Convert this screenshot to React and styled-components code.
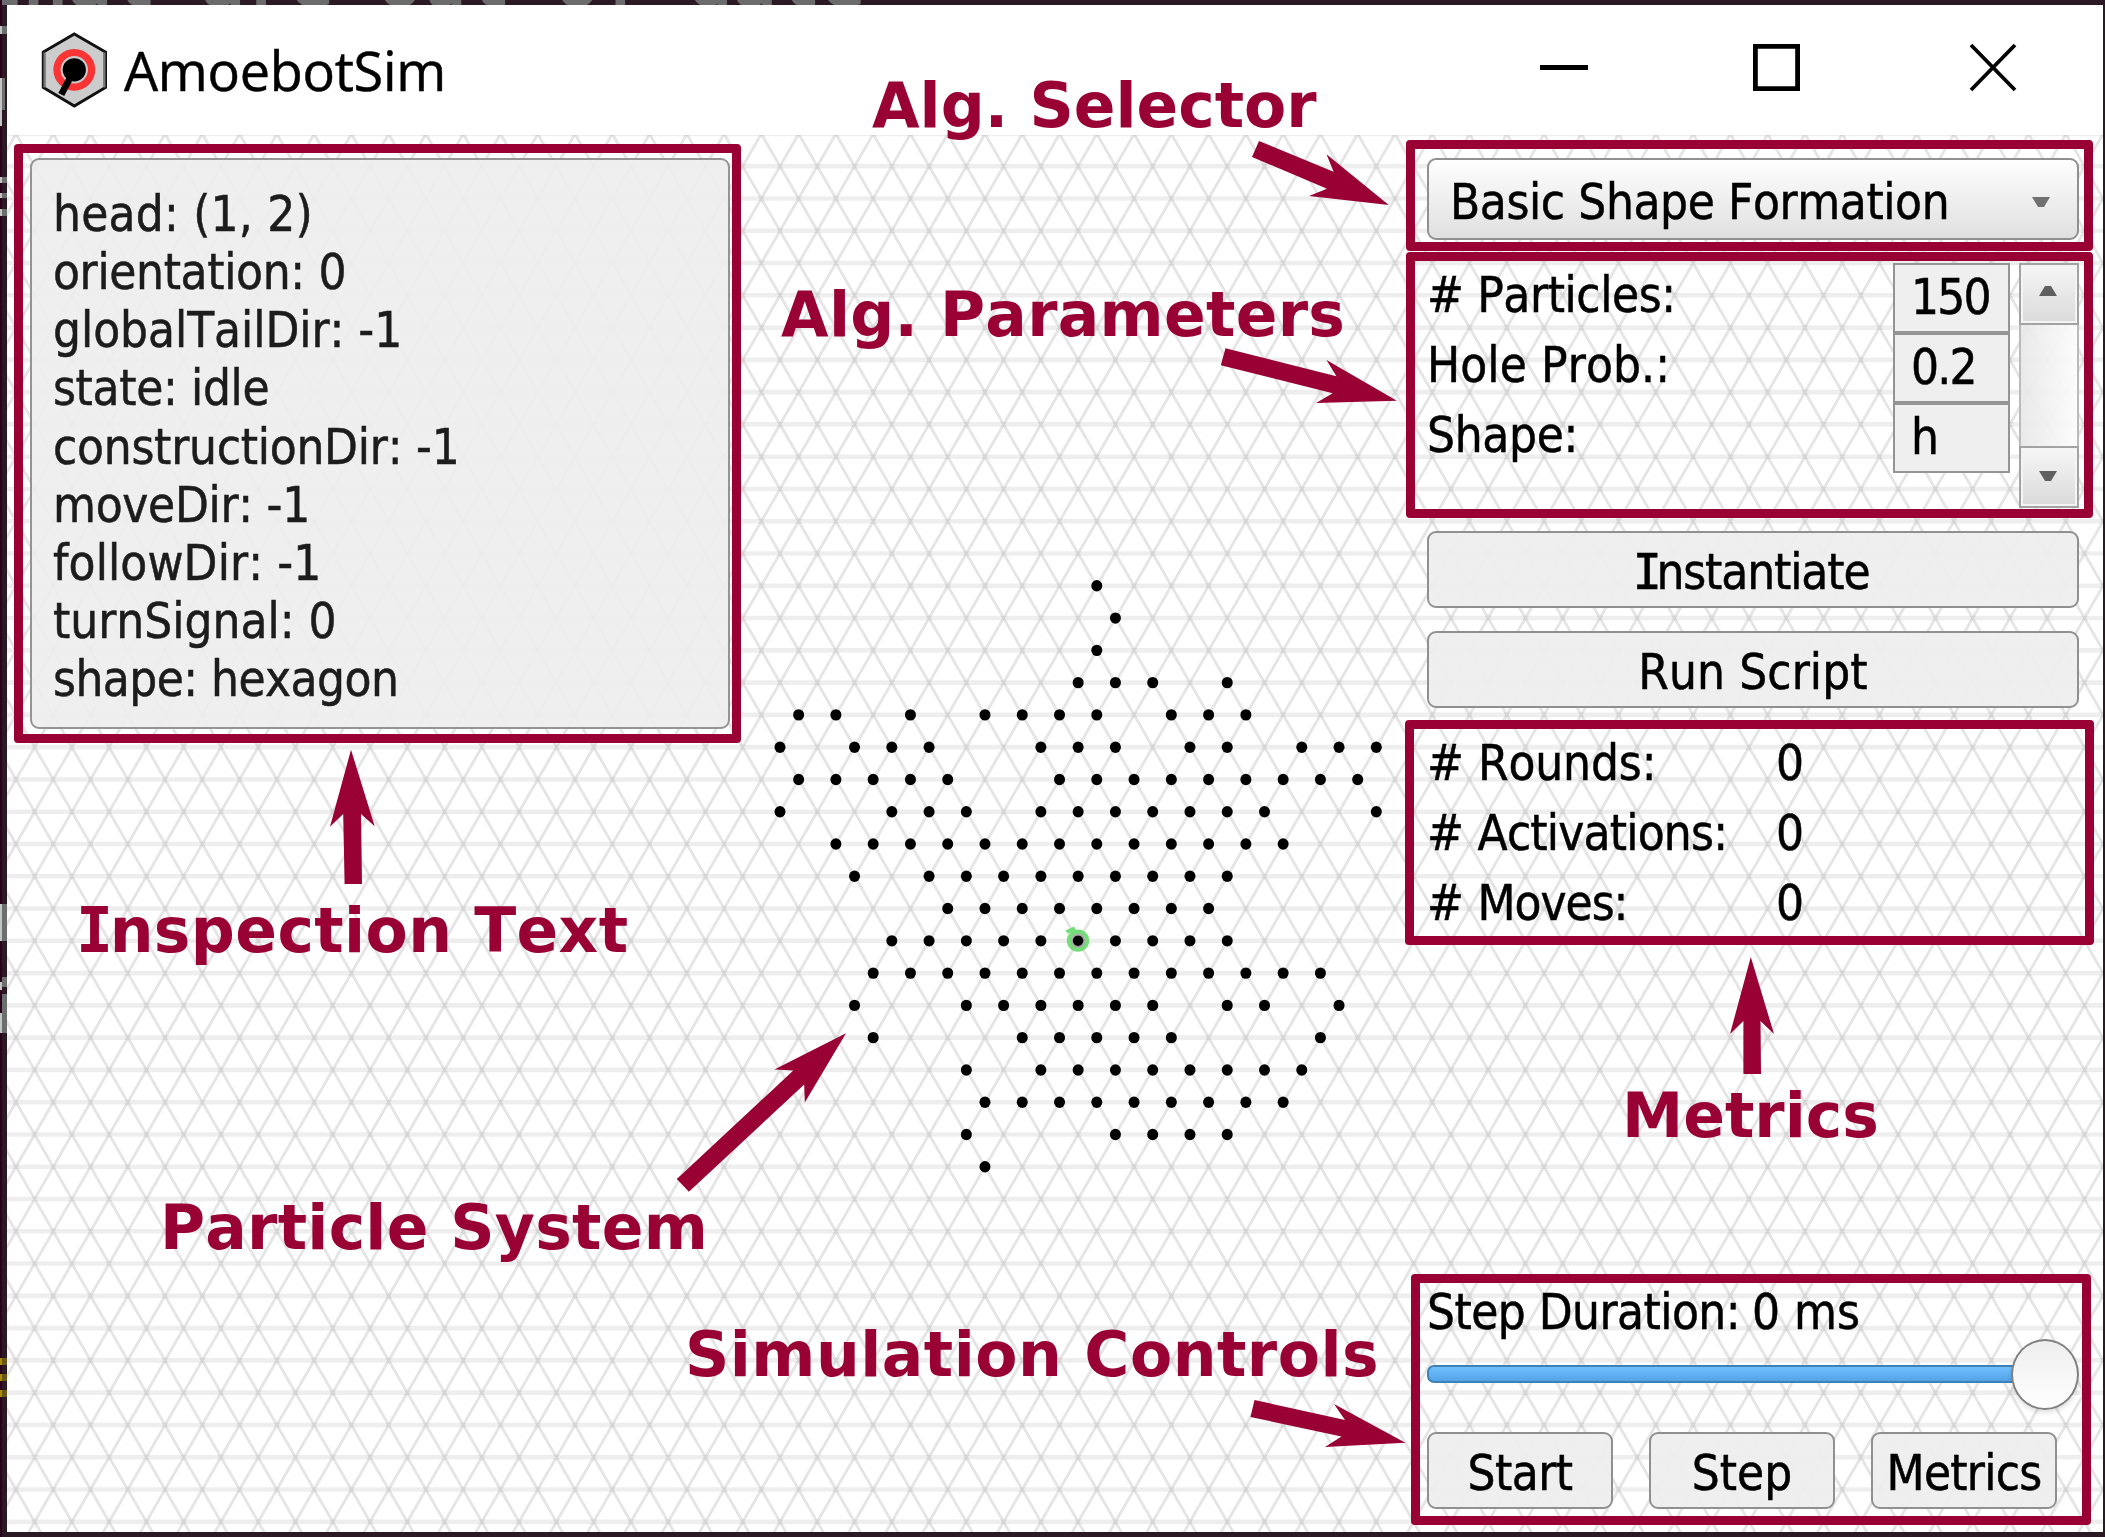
import React from "react";
import styled, { createGlobalStyle } from "styled-components";

const CRIMSON = "#990033";
const UI = `"DejaVu Sans Condensed", "DejaVu Sans", sans-serif`;

const GlobalStyle = createGlobalStyle`
  * { box-sizing: border-box; }
  body { margin: 0; background: #2b1a24; overflow: hidden; font-kerning: none; }
  button, input { font: inherit; font-kerning: inherit; color: inherit; margin: 0; }
`;

/* ---------- desktop and window ---------- */

const Desktop = styled.div`
  position: relative;
  width: 2105px;
  height: 1537px;
  padding: 5px 2px 5px 7px;
  background: #2b1a24;
  overflow: hidden;
  color: #000;
  font-family: ${UI};
  font-size: 49px;
  -webkit-text-stroke: ${(p) => p.$weight}px;
`;

const TerminalLine = styled.div`
  position: absolute;
  left: -21px;
  top: -60px;
  height: 65px;
  overflow: hidden;
  white-space: pre;
  color: #6c6c6c;
  font: 73.6px/80px "DejaVu Sans Mono", monospace;
  -webkit-text-stroke: 3px;
`;

const TerminalEdge = styled.svg`
  position: absolute;
  left: 0;
  top: 0;
`;

const Window = styled.div`
  position: relative;
  display: flex;
  flex-direction: column;
  width: 2096px;
  height: 1527px;
  background: #fff;
`;

const TitleBar = styled.header`
  display: flex;
  align-items: center;
  height: 130px;
  padding-left: 33px;
`;

const Title = styled.h1`
  flex: 1;
  margin: 0 0 0 15px;
  font: 400 54px/80px "Open Sans", sans-serif;
  letter-spacing: -0.3px;
`;

const WindowButtons = styled.div`
  display: flex;
  gap: 154px;
  padding-right: 80px;
`;

const WindowGlyph = styled.svg`
  display: block;
  width: 60px;
  height: 60px;
`;

const Client = styled.main`
  position: relative;
  display: flex;
  justify-content: space-between;
  flex: 1;
  padding: 23px 24px 23px 23px;
  overflow: hidden;
`;

const Canvas = styled.svg`
  position: absolute;
  left: 0;
  top: 0;
`;

/* ---------- inspection panel ---------- */

const Inspector = styled.section`
  position: relative;
  align-self: flex-start;
  width: 700px;
  height: 571px;
  padding: 26px 21px;
  border: 2px solid #949494;
  border-radius: 9px;
  background: rgba(238, 238, 238, 0.93);
  color: #1c1c1c;
`;

const InspectorLine = styled.div`
  line-height: 58.15px;
  white-space: pre;
  letter-spacing: ${(p) => p.$track}px;
`;

/* ---------- side panel ---------- */

const Side = styled.aside`
  position: relative;
  display: flex;
  flex-direction: column;
  width: 652px;
`;

const Select = styled.button`
  display: flex;
  align-items: center;
  justify-content: space-between;
  height: 82px;
  padding: 6px 27px 0 21px;
  border: 2px solid #909090;
  border-radius: 9px;
  background: linear-gradient(#fefefe, #e0e0e0);
  letter-spacing: -0.4px;
`;

const Triangle = styled.svg`
  display: block;
  width: 18px;
  height: 10px;
  fill: ${(p) => p.$tone || "#606060"};
  transform: ${(p) => (p.$up ? "scaleY(-1)" : "none")};
`;

const Params = styled.div`
  display: flex;
  height: 245px;
  margin: 23px 0;
`;

const ParamList = styled.div`
  flex: 1;
  margin-right: 9px;
`;

const ParamRow = styled.label`
  display: flex;
  justify-content: space-between;
  height: 70px;
  line-height: 66px;
`;

const ParamName = styled.span`
  letter-spacing: ${(p) => p.$track}px;
`;

const ParamField = styled.input`
  width: 117px;
  height: 70px;
  padding: 0 0 2px 16px;
  border: 2px solid #949494;
  border-radius: 0;
  outline: none;
  background: #efefef;
  letter-spacing: -1.8px;
`;

const ScrollBar = styled.div`
  display: flex;
  flex-direction: column;
  width: 60px;
`;

const ScrollButton = styled.button`
  display: flex;
  align-items: center;
  justify-content: center;
  height: 62px;
  padding: 0 3px ${(p) => p.$lift}px 0;
  border: 2px solid #a3a3a3;
  box-shadow: inset 0 0 0 2px #f4f4f4;
  background: linear-gradient(#f6f6f6, #dadada);
`;

const ScrollTrack = styled.div`
  flex: 1;
  border: solid #bbb;
  border-width: 0 2px;
  background: linear-gradient(90deg, rgba(232, 232, 232, 0.95), rgba(252, 252, 252, 0.95));
`;

const Button = styled.button`
  display: flex;
  align-items: center;
  justify-content: center;
  width: ${(p) => p.$width || 652}px;
  height: 77px;
  padding: 6px ${(p) => p.$inset || 0}px 0 0;
  margin-bottom: ${(p) => p.$gap || 0}px;
  border: 2px solid #909090;
  border-radius: 9px;
  background: rgba(238, 238, 238, 0.94);
  letter-spacing: ${(p) => p.$track || 0}px;
`;

const SerifI = styled.span`
  font-family: "DejaVu Sans Mono", monospace;
  font-weight: inherit;
  letter-spacing: ${(p) => p.$trim}em;
`;

const Metrics = styled.dl`
  display: grid;
  grid-template-columns: 349px 1fr;
  grid-auto-rows: 70px;
  margin: 20px 0 0;
  line-height: 71px;
`;

const MetricName = styled.dt`
  letter-spacing: ${(p) => p.$track}px;
  word-spacing: ${(p) => -1.5 * p.$track}px;
`;

const MetricValue = styled.dd`
  margin: 0;
`;

const Controls = styled.div`
  display: flex;
  flex-direction: column;
  margin-top: auto;
`;

const Duration = styled.div`
  display: flex;
  gap: 12px;
  line-height: 62px;
`;

const DurationLabel = styled.span`
  letter-spacing: -0.55px;
`;

const Slider = styled.div`
  display: flex;
  align-items: center;
  height: 70px;
  margin: -5px 0 23px;
`;

const SliderTrack = styled.div`
  flex: 1;
  height: 18px;
  margin-right: -4px;
  border: 2px solid #3f80b6;
  border-radius: 7px 0 0 7px;
  background: linear-gradient(#70c0ff, #53a3e6);
`;

const SliderKnob = styled.div`
  width: 68px;
  height: 71px;
  border: 2px solid #808080;
  border-radius: 50%;
  background: linear-gradient(#eeeeee, #fff);
  box-shadow: 0 3px 5px rgba(0, 0, 0, 0.12);
`;

const ButtonRow = styled.div`
  display: flex;
  gap: 36px;
`;

/* ---------- annotations ---------- */

const Frame = styled.div`
  position: absolute;
  left: ${(p) => p.$x}px;
  top: ${(p) => p.$y}px;
  width: ${(p) => p.$w}px;
  height: ${(p) => p.$h}px;
  border: 9px solid ${CRIMSON};
  border-radius: 4px;
  pointer-events: none;
`;

const Callout = styled.div`
  position: absolute;
  left: ${(p) => p.$x}px;
  top: ${(p) => p.$baseline - 61}px;
  color: ${CRIMSON};
  font: 700 61.5px/80px "DejaVu Sans", sans-serif;
  font-kerning: none;
  letter-spacing: ${(p) => p.$track || 0}px;
  white-space: pre;
  -webkit-text-stroke: 0;
`;

const Arrows = styled.svg`
  position: absolute;
  left: 0;
  top: 0;
  fill: ${CRIMSON};
  pointer-events: none;
`;

/* ---------- lattice ---------- */

const HALF = 18.635;
const ROW = 32.275;
const OX = 780;
const OY = 585.8;

const odd = (a, b) => {
  const out = [];
  for (let i = a; i <= b; i += 2) out.push(i);
  return out;
};

const PARTICLES = [
  [17],
  [18],
  [17],
  [16, 18, 20, 24],
  [1, 3, 7, 11, 13, 15, 17, 21, 23, 25],
  [0, 4, 6, 8, 14, 16, 18, 22, 24, 28, 30, 32],
  [...odd(1, 9), ...odd(15, 31)],
  [0, 6, 8, 10, ...odd(14, 26), 32],
  odd(3, 27),
  [4, ...odd(8, 24)],
  odd(9, 23),
  odd(6, 24),
  odd(5, 29),
  [4, ...odd(10, 20), 24, 26, 30],
  [5, ...odd(13, 21), 29],
  [10, ...odd(14, 28)],
  odd(11, 27),
  [10, 18, 20, 22, 24],
  [11],
];

const rows = [];
for (let r = -14; r <= 29; r++) rows.push(`M0 ${(OY + r * ROW).toFixed(2)}H2110`);

const diagonals = [];
const TOP = -14;
const SPAN = 44;
for (let k = -92; k <= 120; k += 2) {
  const x = OX + k * HALF;
  const y = OY + TOP * ROW;
  const y2 = (y + SPAN * ROW).toFixed(2);
  const k1 = x + HALF;
  diagonals.push(`M${k1.toFixed(2)} ${y.toFixed(2)}L${(k1 + SPAN * HALF).toFixed(2)} ${y2}`);
  diagonals.push(`M${k1.toFixed(2)} ${y.toFixed(2)}L${(k1 - SPAN * HALF).toFixed(2)} ${y2}`);
}

function Lattice() {
  return (
    <Canvas width="2096" height="1397" viewBox="7 135 2096 1397">
      <path d={rows.join("")} stroke="#000" strokeOpacity="0.065" strokeWidth="4.6" />
      <path d={diagonals.join("")} stroke="#000" strokeOpacity="0.1" strokeWidth="2.9" />
      {PARTICLES.map((cols, r) =>
        cols.map((c) => (
          <ellipse key={`${r}-${c}`} cx={OX + c * HALF} cy={OY + r * ROW} rx="5.5" ry="5.7" />
        ))
      )}
      <g fill="none" stroke="#74dc78">
        <circle cx="1078" cy="940.6" r="6.6" stroke="#8f8f8f" strokeWidth="3" strokeOpacity="0.7" />
        <circle cx="1078" cy="940.6" r="9.2" strokeWidth="4" />
        <path d="M1066.5 932L1075 928.3" strokeWidth="4" />
      </g>
    </Canvas>
  );
}

function AppIcon() {
  return (
    <svg width="69" height="80" viewBox="40 27.5 69 80">
      <path d="M74.3 31.5L105.5 49.5V85L74.3 103.5L43.3 85V49.5Z" fill="#ccc" stroke="#111" strokeWidth="3" />
      <path d="M44.6 50V85M104.3 50V85" stroke="#777" strokeWidth="2.4" />
      <circle cx="74.3" cy="67.3" r="17.3" fill="none" stroke="#f83434" strokeWidth="7.2" />
      <circle cx="74.3" cy="67.3" r="11.6" />
      <path d="M74.3 67.3L61.3 92" stroke="#000" strokeWidth="6.6" />
    </svg>
  );
}

const Down = (props) => (
  <Triangle viewBox="0 0 18 10" {...props}>
    <path d="M0 0H18L12 10H6Z" />
  </Triangle>
);

const INSPECTION = [
  ["head: (1, 2)", 0.2],
  ["orientation: 0", -0.35],
  ["globalTailDir: -1", -0.05],
  ["state: idle", -0.35],
  ["constructionDir: -1", -0.25],
  ["moveDir: -1", -0.3],
  ["followDir: -1", 0.1],
  ["turnSignal: 0", 0],
  ["shape: hexagon", -0.55],
];

const PARAMS = [
  ["# Particles:", "150", -0.4],
  ["Hole Prob.:", "0.2", 0.1],
  ["Shape:", "h", -0.3],
];

const METRICS = [
  ["# Rounds:", -0.1],
  ["# Activations:", -0.8],
  ["# Moves:", -1],
];

const FRAMES = [
  [14, 144, 727, 598.5],
  [1406, 140, 687, 110.5],
  [1406, 252, 687, 266],
  [1405, 719.5, 688.5, 225.5],
  [1411, 1274, 679.5, 251],
];

const ARROWS = [
  "1259,141 1252,157 1327,188.7 1309,196 1388.8,205 1326.5,154.3 1333.6,171.7",
  "1225.5,348.3 1220.8,365.3 1332.7,393.3 1316,403 1396.9,400.7 1326.5,360 1336.4,376.3",
  "351,749.8 330,826.7 343.2,814 344.6,884 362,884 361,814 374.7,826.3",
  "846,1033.3 774.4,1069.5 793.3,1070.5 676.8,1179 688.9,1191.8 804.2,1084.6 804.8,1102.4",
  "1750.8,957 1730,1034 1743.4,1021 1743.4,1074 1761,1074 1760.5,1021 1774,1034",
  "1254.5,1400 1250.5,1417 1341.5,1436.5 1325,1447 1405.4,1442.7 1334,1404 1345,1420",
];

export default function App() {
  return (
    <>
      <GlobalStyle />
      <Desktop $weight={0.5}>
        <TerminalLine aria-hidden="true">that are out of date</TerminalLine>
        <TerminalEdge width="7" height="1537">
          <path d="M0 0H2V1537H0Z" fill="#2b001c" />
          <path d="M0 26H2V34H0ZM0 78H2V126H0ZM0 177H2V183H0ZM0 193H2V198H0ZM0 209H2V216H0ZM0 904H2V941H0ZM0 982H2V990H0ZM0 1013H2V1033H0Z" fill="#c4c4c4" />
          <path d="M2 26H7V34H2ZM2 78H5V110H2ZM2 177H7V183H2ZM2 193H7V198H2ZM2 209H7V216H2ZM2 904H7V941H2ZM2 977H7V987H2ZM2 994H7V1033H2Z" fill="#6b6f6d" />
          <path d="M0 1358H2V1365H0ZM0 1374H2V1381H0ZM0 1390H2V1397H0Z" fill="#b08a00" />
          <path d="M2 1358H7V1365H2ZM2 1374H7V1381H2ZM2 1390H7V1397H2Z" fill="#66581a" />
        </TerminalEdge>
        <Window>
          <TitleBar>
            <AppIcon />
            <Title>AmoebotSim</Title>
            <WindowButtons>
              <WindowGlyph viewBox="0 0 60 60"><path d="M5 25H53V30H5Z" /></WindowGlyph>
              <WindowGlyph viewBox="0 0 60 60">
                <path d="M6.4 6.4H48.6V48.6H6.4Z" fill="none" stroke="#000" strokeWidth="4.8" />
              </WindowGlyph>
              <WindowGlyph viewBox="0 0 60 60">
                <path d="M8 5L52 50M52 5L8 50" fill="none" stroke="#000" strokeWidth="3.8" />
              </WindowGlyph>
            </WindowButtons>
          </TitleBar>
          <Client>
            <Lattice />
            <Inspector>
              {INSPECTION.map(([line, track]) => (
                <InspectorLine key={line} $track={track}>{line}</InspectorLine>
              ))}
            </Inspector>
            <Side>
              <Select>
                Basic Shape Formation
                <Down $tone="#707070" />
              </Select>
              <Params>
                <ParamList>
                  {PARAMS.map(([name, value, track]) => (
                    <ParamRow key={name}>
                      <ParamName $track={track}>{name}</ParamName>
                      <ParamField defaultValue={value} />
                    </ParamRow>
                  ))}
                </ParamList>
                <ScrollBar>
                  <ScrollButton $lift={7}><Down $up /></ScrollButton>
                  <ScrollTrack />
                  <ScrollButton $lift={2}><Down /></ScrollButton>
                </ScrollBar>
              </Params>
              <Button $gap={23} $track={-1.1} $inset={4}>
                <span><SerifI $trim={-0.115}>I</SerifI>nstantiate</span>
              </Button>
              <Button $track={0.1}>Run Script</Button>
              <Metrics>
                {METRICS.map(([name, track]) => (
                  <React.Fragment key={name}>
                    <MetricName $track={track}>{name}</MetricName>
                    <MetricValue>0</MetricValue>
                  </React.Fragment>
                ))}
              </Metrics>
              <Controls>
                <Duration>
                  <DurationLabel>Step Duration:</DurationLabel>
                  <span>0 ms</span>
                </Duration>
                <Slider>
                  <SliderTrack />
                  <SliderKnob />
                </Slider>
                <ButtonRow>
                  <Button $width={186} $track={-0.5}>Start</Button>
                  <Button $width={186}>Step</Button>
                  <Button $width={186} $track={-0.75}>Metrics</Button>
                </ButtonRow>
              </Controls>
            </Side>
          </Client>
        </Window>
        {FRAMES.map(([x, y, w, h]) => (
          <Frame key={`${x}-${y}`} $x={x} $y={y} $w={w} $h={h} />
        ))}
        <Arrows width="2105" height="1537">
          {ARROWS.map((points) => <polygon key={points} points={points} />)}
        </Arrows>
        <Callout $x={872} $baseline={127.3}>Alg. Selector</Callout>
        <Callout $x={781} $baseline={336} $track={0.3}>Alg. Parameters</Callout>
        <Callout $x={76} $baseline={952} $track={0.4}>
          <SerifI $trim={-0.055}>I</SerifI>nspection Text
        </Callout>
        <Callout $x={160} $baseline={1249} $track={0.25}>Particle System</Callout>
        <Callout $x={1622} $baseline={1136.5}>Metrics</Callout>
        <Callout $x={685} $baseline={1376} $track={0.5}>Simulation Controls</Callout>
      </Desktop>
    </>
  );
}
